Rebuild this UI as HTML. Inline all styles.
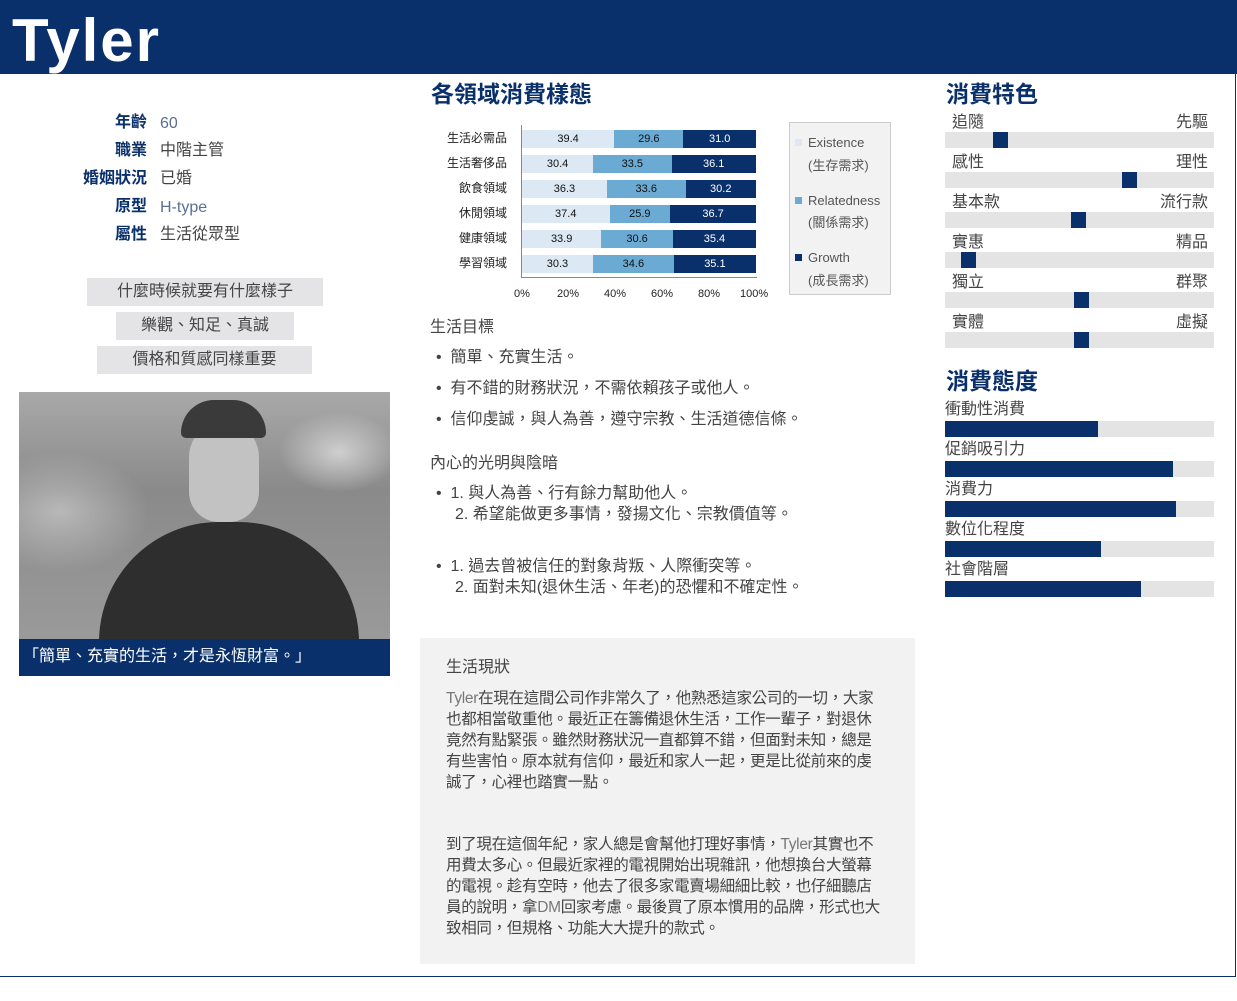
<!DOCTYPE html>
<html><head><meta charset="utf-8"><style>
*{margin:0;padding:0;box-sizing:border-box}
body{width:1237px;height:1001px;position:relative;background:#fff;font-family:"Liberation Sans","Noto Sans CJK TC",sans-serif;color:#333;overflow:hidden;line-height:1.05}
.a{position:absolute;white-space:nowrap}
.hdr{left:0;top:0;width:1237px;height:74px;background:#0a306b}
.frame{left:0;top:74px;width:1236px;height:903px;border-right:1px solid #0a306b;border-bottom:1px solid #0a306b}
.lbl{font-weight:bold;color:#0a306b;font-size:16px;text-align:right;width:70px}
.val{font-size:16px;color:#444}
.tag{background:#e4e4e6;font-size:16px;color:#444;text-align:center;height:28px;line-height:28px}
h2{font-size:23px;color:#0a306b;font-weight:bold;position:absolute;white-space:nowrap}
.row{position:absolute;left:522px;width:234px;height:18px;display:flex;font-size:11px;color:#111}
.row div{text-align:center;line-height:18px}
.e{background:#dce8f4}.r{background:#6aaad3}.g{background:#0a306b;color:#fff}
.cl{position:absolute;font-size:12px;color:#222;text-align:right;width:80px;left:427px;line-height:1.4}
.sl{position:absolute;left:945px;width:269px;height:16px;background:#e4e4e4}
.sl i{position:absolute;top:0;width:15px;height:16px;background:#0a306b}
.sm{position:absolute;font-size:16px;color:#444}
.fb{position:absolute;left:945px;width:269px;height:16px;background:#e4e4e4}
.fb i{position:absolute;left:0;top:0;height:16px;background:#0a306b}
.t{font-size:16px;color:#444}
.p{font-size:15.5px;letter-spacing:-0.3px}
</style></head><body>
<div class="a hdr"></div>
<div class="a frame"></div>
<div class="a" style="left:12px;top:6px;font-size:60px;font-weight:bold;color:#fff;letter-spacing:2px;line-height:70px">Tyler</div>

<div class="a lbl" style="left:77px;top:115px">年齡</div><div class="a val" style="left:160px;top:116px;color:#5a6f90">60</div>
<div class="a lbl" style="left:77px;top:143px">職業</div><div class="a val" style="left:160px;top:143px">中階主管</div>
<div class="a lbl" style="left:57px;top:171px;width:90px">婚姻狀況</div><div class="a val" style="left:160px;top:171px">已婚</div>
<div class="a lbl" style="left:77px;top:199px">原型</div><div class="a val" style="left:160px;top:200px;color:#5a6f90">H-type</div>
<div class="a lbl" style="left:77px;top:227px">屬性</div><div class="a val" style="left:160px;top:227px">生活從眾型</div>

<div class="a tag" style="left:87px;top:278px;width:236px">什麼時候就要有什麼樣子</div>
<div class="a tag" style="left:116px;top:312px;width:178px">樂觀、知足、真誠</div>
<div class="a tag" style="left:97px;top:346px;width:215px">價格和質感同樣重要</div>

<div class="a" style="left:19px;top:392px;width:371px;height:247px;overflow:hidden;background:linear-gradient(180deg,#a9a9a9 0%,#8a8a8a 40%,#9a9a9a 100%)">
<div class="a" style="left:0;top:0;width:371px;height:247px;background:radial-gradient(ellipse 60px 40px at 320px 60px,#cfcfcf,transparent),radial-gradient(ellipse 90px 60px at 40px 120px,#b8b8b8,transparent)"></div>
<div class="a" style="left:80px;top:130px;width:260px;height:140px;border-radius:120px 120px 0 0;background:#2e2e2e"></div>
<div class="a" style="left:170px;top:30px;width:70px;height:100px;border-radius:35px 35px 30px 30px;background:#c2c2c2"></div>
<div class="a" style="left:162px;top:8px;width:85px;height:38px;border-radius:40px 40px 6px 6px;background:#3a3a3a"></div>
</div>
<div class="a" style="left:19px;top:639px;width:371px;height:37px;background:#0a306b;color:#fff;font-size:16px;line-height:36px;padding-left:4px">「簡單、充實的生活，才是永恆財富。」</div>

<h2 style="left:431px;top:82px">各領域消費樣態</h2>
<div class="a" style="left:521px;top:125px;width:1px;height:153px;background:#888"></div>
<div class="a" style="left:521px;top:277px;width:236px;height:1px;background:#888"></div>
<div class="cl" style="top:130px">生活必需品</div>
<div class="cl" style="top:155px">生活奢侈品</div>
<div class="cl" style="top:180px">飲食領域</div>
<div class="cl" style="top:205px">休閒領域</div>
<div class="cl" style="top:230px">健康領域</div>
<div class="cl" style="top:255px">學習領域</div>
<div class="row" style="top:130px"><div class="e" style="width:39.4%">39.4</div><div class="r" style="width:29.6%">29.6</div><div class="g" style="width:31%">31.0</div></div>
<div class="row" style="top:155px"><div class="e" style="width:30.4%">30.4</div><div class="r" style="width:33.5%">33.5</div><div class="g" style="width:36.1%">36.1</div></div>
<div class="row" style="top:180px"><div class="e" style="width:36.3%">36.3</div><div class="r" style="width:33.6%">33.6</div><div class="g" style="width:30.1%">30.2</div></div>
<div class="row" style="top:205px"><div class="e" style="width:37.4%">37.4</div><div class="r" style="width:25.9%">25.9</div><div class="g" style="width:36.7%">36.7</div></div>
<div class="row" style="top:230px"><div class="e" style="width:33.9%">33.9</div><div class="r" style="width:30.6%">30.6</div><div class="g" style="width:35.5%">35.4</div></div>
<div class="row" style="top:255px"><div class="e" style="width:30.3%">30.3</div><div class="r" style="width:34.6%">34.6</div><div class="g" style="width:35.1%">35.1</div></div>
<div class="a" style="top:289px;left:514px;font-size:11px;color:#222">0%</div>
<div class="a" style="top:289px;left:557px;font-size:11px;color:#222">20%</div>
<div class="a" style="top:289px;left:604px;font-size:11px;color:#222">40%</div>
<div class="a" style="top:289px;left:651px;font-size:11px;color:#222">60%</div>
<div class="a" style="top:289px;left:698px;font-size:11px;color:#222">80%</div>
<div class="a" style="top:289px;left:740px;font-size:11px;color:#222">100%</div>
<div class="a" style="left:789px;top:122px;width:102px;height:173px;background:#f2f2f2;border:1px solid #ccc;font-size:13px;color:#555">
<div class="a" style="left:5px;top:16px;width:7px;height:7px;background:#dce8f4"></div><div class="a" style="left:18px;top:13px">Existence</div><div class="a" style="left:18px;top:36px">(生存需求)</div>
<div class="a" style="left:5px;top:74px;width:7px;height:7px;background:#6aaad3"></div><div class="a" style="left:18px;top:71px">Relatedness</div><div class="a" style="left:18px;top:93px">(關係需求)</div>
<div class="a" style="left:5px;top:131px;width:7px;height:7px;background:#0a306b"></div><div class="a" style="left:18px;top:128px">Growth</div><div class="a" style="left:18px;top:151px">(成長需求)</div>
</div>

<div class="a t" style="left:430px;top:320px">生活目標</div>
<div class="a t" style="left:436px;top:350px">•&nbsp;&nbsp;簡單、充實生活。</div>
<div class="a t" style="left:436px;top:381px">•&nbsp;&nbsp;有不錯的財務狀況，不需依賴孩子或他人。</div>
<div class="a t" style="left:436px;top:412px">•&nbsp;&nbsp;信仰虔誠，與人為善，遵守宗教、生活道德信條。</div>
<div class="a t" style="left:430px;top:456px">內心的光明與陰暗</div>
<div class="a t" style="left:436px;top:486px">•&nbsp;&nbsp;1. 與人為善、行有餘力幫助他人。</div>
<div class="a t" style="left:455px;top:507px">2. 希望能做更多事情，發揚文化、宗教價值等。</div>
<div class="a t" style="left:436px;top:559px">•&nbsp;&nbsp;1. 過去曾被信任的對象背叛、人際衝突等。</div>
<div class="a t" style="left:455px;top:580px">2. 面對未知(退休生活、年老)的恐懼和不確定性。</div>

<div class="a" style="left:420px;top:638px;width:495px;height:326px;background:#f2f2f2"></div>
<div class="a t" style="left:446px;top:660px">生活現狀</div>
<div class="a t p" style="left:446px;top:688px;white-space:normal;width:440px;line-height:21px"><span style="color:#777">Tyler</span>在現在這間公司作非常久了，他熟悉這家公司的一切，大家也都相當敬重他。最近正在籌備退休生活，工作一輩子，對退休竟然有點緊張。雖然財務狀況一直都算不錯，但面對未知，總是有些害怕。原本就有信仰，最近和家人一起，更是比從前來的虔誠了，心裡也踏實一點。</div>
<div class="a t p" style="left:446px;top:834px;white-space:normal;width:440px;line-height:21px">到了現在這個年紀，家人總是會幫他打理好事情，<span style="color:#777">Tyler</span>其實也不用費太多心。但最近家裡的電視開始出現雜訊，他想換台大螢幕的電視。趁有空時，他去了很多家電賣場細細比較，也仔細聽店員的說明，拿<span style="color:#777">DM</span>回家考慮。最後買了原本慣用的品牌，形式也大致相同，但規格、功能大大提升的款式。</div>

<h2 style="left:946px;top:82px">消費特色</h2>
<div class="sm" style="left:952px;top:115px">追隨</div><div class="sm" style="left:1176px;top:115px">先驅</div><div class="sl" style="top:132px"><i style="left:48px"></i></div>
<div class="sm" style="left:952px;top:155px">感性</div><div class="sm" style="left:1176px;top:155px">理性</div><div class="sl" style="top:172px"><i style="left:177px"></i></div>
<div class="sm" style="left:952px;top:195px">基本款</div><div class="sm" style="left:1160px;top:195px">流行款</div><div class="sl" style="top:212px"><i style="left:126px"></i></div>
<div class="sm" style="left:952px;top:235px">實惠</div><div class="sm" style="left:1176px;top:235px">精品</div><div class="sl" style="top:252px"><i style="left:16px"></i></div>
<div class="sm" style="left:952px;top:275px">獨立</div><div class="sm" style="left:1176px;top:275px">群聚</div><div class="sl" style="top:292px"><i style="left:129px"></i></div>
<div class="sm" style="left:952px;top:315px">實體</div><div class="sm" style="left:1176px;top:315px">虛擬</div><div class="sl" style="top:332px"><i style="left:129px"></i></div>

<h2 style="left:946px;top:369px">消費態度</h2>
<div class="sm" style="left:945px;top:402px">衝動性消費</div><div class="fb" style="top:421px"><i style="width:153px"></i></div>
<div class="sm" style="left:945px;top:442px">促銷吸引力</div><div class="fb" style="top:461px"><i style="width:228px"></i></div>
<div class="sm" style="left:945px;top:482px">消費力</div><div class="fb" style="top:501px"><i style="width:231px"></i></div>
<div class="sm" style="left:945px;top:522px">數位化程度</div><div class="fb" style="top:541px"><i style="width:156px"></i></div>
<div class="sm" style="left:945px;top:562px">社會階層</div><div class="fb" style="top:581px"><i style="width:196px"></i></div>
</body></html>
